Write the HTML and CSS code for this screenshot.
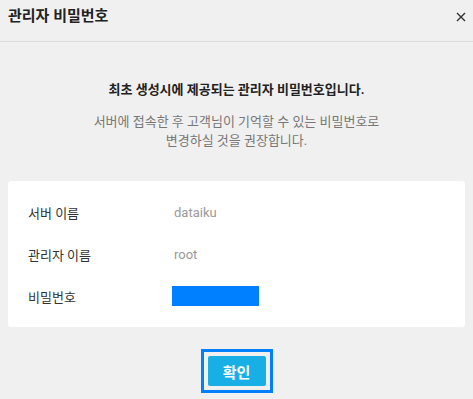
FILE: index.html
```html
<!DOCTYPE html>
<html lang="ko">
<head>
    <meta charset="UTF-8">
    <meta name="viewport" content="width=device-width, initial-scale=1.0">
    <title>관리자 비밀번호</title>
    <link rel="stylesheet" href="styles.css">
</head>
<body>
    <div class="modal">
        <header class="modal-header">
            <h2>관리자 비밀번호</h2>
            <button class="close-btn" aria-label="닫기">
                <svg width="10" height="10" viewBox="0 0 10 10">
                    <path d="M1 1L9 9M9 1L1 9" stroke="#333" stroke-width="1.4" fill="none"/>
                </svg>
            </button>
        </header>

        <main class="modal-body">
            <div class="notice">
                <p class="notice-title">최초 생성시에 제공되는 관리자 비밀번호입니다.</p>
                <p class="notice-desc">서버에 접속한 후 고객님이 기억할 수 있는 비밀번호로<br>변경하실 것을 권장합니다.</p>
            </div>

            <div class="info-card">
                <div class="info-row">
                    <span class="info-label">서버 이름</span>
                    <span class="info-value">dataiku</span>
                </div>
                <div class="info-row">
                    <span class="info-label">관리자 이름</span>
                    <span class="info-value">root</span>
                </div>
                <div class="info-row">
                    <span class="info-label">비밀번호</span>
                    <span class="password-mask"></span>
                </div>
            </div>

            <div class="actions">
                <div class="focus-ring">
                    <button class="confirm-btn">확인</button>
                </div>
            </div>
        </main>
    </div>
</body>
</html>
```

FILE: styles.css
```css
* {
    margin: 0;
    padding: 0;
    box-sizing: border-box;
}

body {
    font-family: Roboto, "Noto Sans CJK KR", sans-serif;
    background: #f0f0f0;
    color: #333;
}

.modal-header {
    height: 42px;
    padding: 6px 7px 0 8px;
    border-bottom: 1px solid #dcdcdc;
    display: flex;
    justify-content: space-between;
    align-items: flex-start;
}

.modal-header h2 {
    font-size: 15px;
    font-weight: 700;
    line-height: 20px;
    color: #222;
}

.close-btn {
    border: none;
    background: none;
    width: 10px;
    height: 10px;
    margin-top: 6px;
    cursor: pointer;
    display: flex;
}

.modal-body {
    padding: 38px 8px 0 8px;
}

.notice {
    text-align: center;
    font-size: 13px;
    line-height: 19px;
}

.notice-title {
    font-weight: 700;
    color: #222;
}

.notice-desc {
    margin-top: 13px;
    color: #777;
}

.info-card {
    margin-top: 31px;
    background: white;
    border-radius: 3px;
    padding: 10px 20px;
}

.info-row {
    height: 42px;
    display: flex;
    align-items: center;
    font-size: 13px;
}

.info-label {
    width: 144px;
    color: #333;
}

.info-value {
    color: #999;
    padding-left: 2px;
}

.password-mask {
    display: inline-block;
    width: 87px;
    height: 20px;
    background: #0080ff;
}

.actions {
    display: flex;
    justify-content: center;
    margin-top: 22px;
}

.focus-ring {
    border: 3px solid #0080ff;
    padding: 4px;
    display: flex;
}

.confirm-btn {
    width: 58px;
    height: 30px;
    border: none;
    border-radius: 2px;
    background: #18aee6;
    color: white;
    font-family: Roboto, "Noto Sans CJK KR", sans-serif;
    font-size: 15px;
    font-weight: 700;
    cursor: pointer;
}
```
